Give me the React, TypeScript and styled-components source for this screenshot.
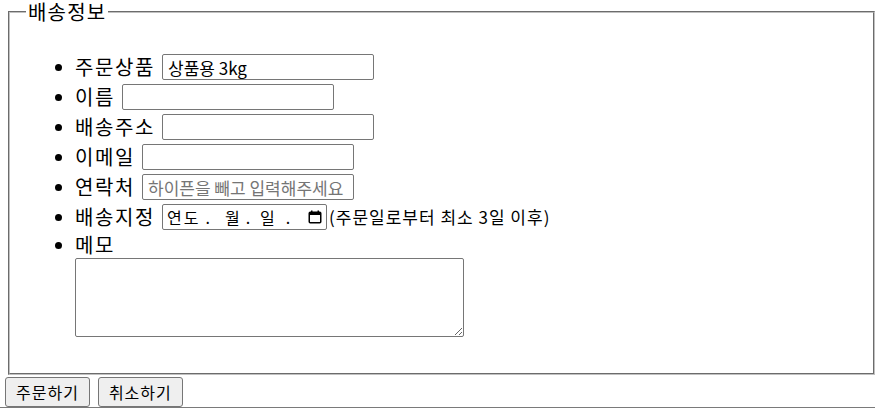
import React from "react";
import styled, { createGlobalStyle } from "styled-components";

const Global = createGlobalStyle`
  html, body { margin: 0; padding: 0; background: #fff; }
  body {
    font-family: "Noto Sans CJK KR", "Noto Sans", sans-serif;
    color: #000;
  }
`;

const Form = styled.form`
  display: flex;
  flex-direction: column;
  width: 877px;
`;

const Fieldset = styled.fieldset`
  margin: 0 2px 0 8px;
  padding: 0;
  border: 2px groove rgb(192, 192, 192);
  min-width: 0;
`;

const Legend = styled.legend`
  margin-left: 16px;
  padding: 0 2px;
  font-size: 20px;
  line-height: 24px;
  letter-spacing: 1.2px;
`;

const List = styled.ul`
  list-style: none;
  margin: 28px 0 36px;
  padding: 0 0 0 65px;
`;

const Row = styled.li`
  display: flex;
  align-items: center;
  height: 30px;
  font-size: 20px;
  line-height: 24px;
  &::before {
    content: "";
    flex: none;
    width: 7px;
    height: 7px;
    border-radius: 50%;
    background: #000;
    margin-left: -20px;
    margin-right: 13px;
  }
`;

const MemoItem = styled.li`
  display: flex;
  flex-direction: column;
`;

const MemoHead = styled.div`
  display: flex;
  align-items: center;
  height: 26px;
  font-size: 20px;
  line-height: 24px;
  &::before {
    content: "";
    flex: none;
    width: 7px;
    height: 7px;
    border-radius: 50%;
    background: #000;
    margin-left: -20px;
    margin-right: 13px;
  }
`;

const Label = styled.label`
  margin-right: 7px;
  letter-spacing: 1.6px;
  white-space: nowrap;
`;

const TextInput = styled.input`
  box-sizing: border-box;
  width: 212px;
  height: 26px;
  padding: 0 5px;
  border: 1px solid #767676;
  border-radius: 2px;
  font-family: "Noto Sans CJK KR", "Noto Sans", sans-serif;
  font-size: 17px;
  color: #000;
  background: #fff;
  &::placeholder { color: #757575; }
`;

const DateBox = styled.div`
  box-sizing: border-box;
  display: flex;
  align-items: center;
  width: 165px;
  height: 26px;
  padding: 0 4px;
  border: 1px solid #767676;
  border-radius: 2px;
  font-size: 16px;
  line-height: 20px;
  letter-spacing: 2px;
  background: #fff;
  flex: none;
`;

const Seg = styled.span<{ $ml: number }>`
  margin-left: ${(p) => p.$ml}px;
  white-space: nowrap;
`;

const CalIcon = styled.svg`
  margin-left: auto;
  width: 14px;
  height: 14px;
  flex: none;
`;

const Note = styled.span`
  margin-left: 2px;
  font-size: 17px;
  letter-spacing: 1px;
  white-space: nowrap;
`;

const Memo = styled.textarea`
  box-sizing: border-box;
  display: block;
  width: 389px;
  height: 79px;
  border: 1px solid #767676;
  border-radius: 2px;
  margin: 0;
  padding: 2px;
  resize: both;
  font-family: "Noto Sans CJK KR", "Noto Sans", sans-serif;
  font-size: 16px;
`;

const ButtonRow = styled.div`
  display: flex;
  gap: 8px;
  margin: 2px 0 0 5px;
`;

const Button = styled.button`
  box-sizing: border-box;
  height: 30px;
  padding: 0 10px;
  border: 1px solid #767676;
  border-radius: 3px;
  background: #efefef;
  font-family: "Noto Sans CJK KR", "Noto Sans", sans-serif;
  font-size: 16px;
  line-height: 20px;
  letter-spacing: 1px;
  color: #000;
`;

const Divider = styled.div`
  width: 875px;
  height: 1px;
  background: #7a7a7a;
`;

const fields = [
  { label: "주문상품", value: "상품용 3kg" },
  { label: "이름" },
  { label: "배송주소" },
  { label: "이메일" },
  { label: "연락처", placeholder: "하이픈을 빼고 입력해주세요" },
];

export default function App() {
  return (
    <>
      <Global />
      <Form onSubmit={(e) => e.preventDefault()}>
        <Fieldset>
          <Legend>배송정보</Legend>
          <List>
            {fields.map((f) => (
              <Row key={f.label}>
                <Label>{f.label}</Label>
                <TextInput
                  type="text"
                  defaultValue={f.value}
                  placeholder={f.placeholder}
                />
              </Row>
            ))}
            <Row>
              <Label>배송지정</Label>
              <DateBox>
                <Seg $ml={0}>연도</Seg>
                <Seg $ml={5}>.</Seg>
                <Seg $ml={13}>월</Seg>
                <Seg $ml={4}>.</Seg>
                <Seg $ml={8}>일</Seg>
                <Seg $ml={9}>.</Seg>
                <CalIcon viewBox="0 0 14 14" aria-hidden="true">
                  <rect x="1.25" y="2.25" width="11.5" height="10.5" rx="1" fill="none" stroke="#000" strokeWidth="1.5" />
                  <rect x="1" y="2" width="12" height="3" fill="#000" />
                  <rect x="3" y="0.5" width="1.5" height="2" fill="#000" />
                  <rect x="9.5" y="0.5" width="1.5" height="2" fill="#000" />
                </CalIcon>
              </DateBox>
              <Note>(주문일로부터 최소 3일 이후)</Note>
            </Row>
            <MemoItem>
              <MemoHead>
                <Label>메모</Label>
              </MemoHead>
              <Memo />
            </MemoItem>
          </List>
        </Fieldset>
        <ButtonRow>
          <Button type="submit">주문하기</Button>
          <Button type="reset">취소하기</Button>
        </ButtonRow>
        <Divider />
      </Form>
    </>
  );
}
